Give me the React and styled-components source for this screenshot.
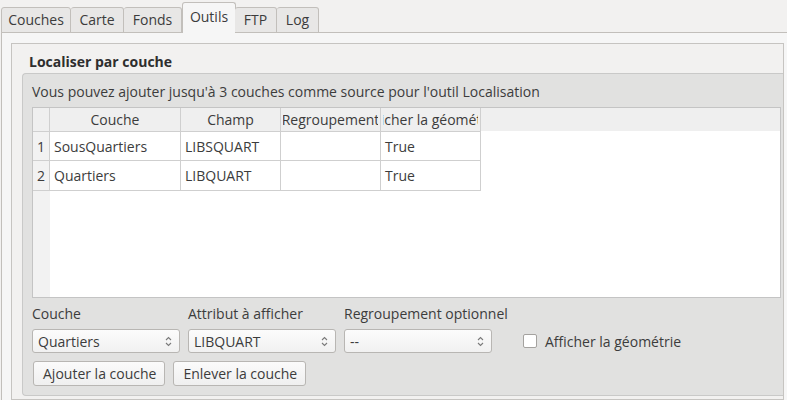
import React from "react";
import styled, { createGlobalStyle } from "styled-components";

const Global = createGlobalStyle`
  html, body { margin: 0; padding: 0; background: #f2f1f0; }
  body { font-family: "Open Sans", "Noto Sans", sans-serif; font-size: 14px; color: #3c3c3c; }
  * { box-sizing: border-box; }
`;

const Window = styled.div`
  width: 787px;
  height: 400px;
  overflow: hidden;
  display: flex;
  flex-direction: column;
`;

const TabBar = styled.div`
  display: flex;
  align-items: flex-end;
  height: 33px;
  padding-left: 1px;
  margin-bottom: -1px;
  position: relative;
  z-index: 1;
`;

const Tab = styled.div`
  height: ${(p) => (p.$active ? "31px" : "26px")};
  display: flex;
  align-items: center;
  justify-content: center;
  padding-bottom: ${(p) => (p.$active ? "3px" : "1px")};
  border: 1px solid #c2bfbb;
  border-bottom: ${(p) => (p.$active ? "none" : "1px solid #c2bfbb")};
  border-left: ${(p) => (p.$first || p.$active ? "1px solid #c2bfbb" : "none")};
  border-radius: 3px 3px 0 0;
  background: ${(p) => (p.$active ? "#f6f6f6" : "#e8e7e6")};
  color: #3c3c3c;
  font-size: 14px;
  white-space: nowrap;
  margin-left: ${(p) => (p.$afterActive ? "-1px" : "0")};
  width: ${(p) => p.$w}px;
`;

const Pane = styled.div`
  flex: 1;
  border-top: 1px solid #c2bfbb;
  border-left: 1px solid #c2bfbb;
  margin-left: 1px;
  background: #f6f6f6;
  padding: 10px 3px 0 9px;
  display: flex;
  flex-direction: column;
`;

const GroupBox = styled.div`
  flex: 1;
  border: 1px solid #c6c4c1;
  background: #f2f1f0;
  padding: 0 0 3px 10px;
  display: flex;
  flex-direction: column;
`;

const GroupTitle = styled.div`
  height: 29px;
  display: flex;
  align-items: center;
  padding-left: 7px;
  padding-top: 5px;
  font-weight: 700;
  font-size: 14px;
  color: #2e2e2e;
`;

const Frame = styled.div`
  flex: 1;
  background: #e1e1e0;
  border: 1px solid #c9c9c8;
  border-right: none;
  border-radius: 4px 0 0 4px;
  padding: 0 2px 0 9px;
  display: flex;
  flex-direction: column;
`;

const Info = styled.div`
  height: 33px;
  display: flex;
  align-items: center;
  padding-top: 2px;
  white-space: nowrap;
`;

const TableBox = styled.div`
  height: 191px;
  border: 1px solid #c4c4c4;
  background: #ffffff;
  display: grid;
  grid-template-columns: 17px 131px 100px 100px 100px 1fr;
  grid-template-rows: 24px 29px 30px 1fr;
  overflow: hidden;
`;

const HeadCell = styled.div`
  background: #efefef;
  border-right: 1px solid #cfcfcf;
  border-bottom: 1px solid #cfcfcf;
  padding: 0 2px;
  display: flex;
  align-items: center;
  min-width: 0;
`;

const HeadClip = styled.div`
  width: 100%;
  overflow: hidden;
  display: flex;
  justify-content: center;
  white-space: nowrap;
`;

const HeadText = styled.span`
  flex-shrink: 0;
`;

const HeadFill = styled.div`
  background: #efefef;
  border-bottom: 1px solid #ffffff;
`;

const RowHead = styled.div`
  background: #f2f2f2;
  border-right: 1px solid #cfcfcf;
  border-bottom: 1px solid #cfcfcf;
  display: flex;
  align-items: center;
  justify-content: center;
`;

const Cell = styled.div`
  border-right: 1px solid #cfcfcf;
  border-bottom: 1px solid #cfcfcf;
  display: flex;
  align-items: center;
  padding-left: 4px;
  white-space: nowrap;
  overflow: hidden;
`;

const Blank = styled.div`
  background: #ffffff;
`;

const RowHeadFill = styled.div`
  background: #f2f2f2;
`;

const FormGrid = styled.div`
  display: grid;
  grid-template-columns: 148px 148px 148px auto;
  column-gap: 8px;
  margin-top: 2px;
  align-items: center;
`;

const Label = styled.div`
  height: 27px;
  display: flex;
  align-items: center;
  white-space: nowrap;
`;

const Combo = styled.div`
  height: 24px;
  border: 1px solid #b8b6b3;
  border-radius: 3px;
  background: linear-gradient(#fcfcfc, #f1f1f1);
  display: flex;
  align-items: center;
  justify-content: space-between;
  padding: 0 7px 0 5px;
  margin-top: 2px;
  white-space: nowrap;
`;

const CheckWrap = styled.label`
  display: flex;
  align-items: center;
  gap: 8px;
  margin-left: 23px;
  margin-top: 2px;
  white-space: nowrap;
`;

const Box = styled.span`
  width: 14px;
  height: 14px;
  border: 1px solid #a4a29f;
  border-radius: 2px;
  background: #ffffff;
  display: inline-block;
`;

const ButtonRow = styled.div`
  display: flex;
  gap: 8px;
  margin-top: 8px;
  padding-left: 1px;
`;

const Button = styled.button`
  height: 25px;
  padding: 0 8px 0 9px;
  border: 1px solid #b8b6b3;
  border-radius: 3px;
  background: linear-gradient(#fbfbfb, #efefef);
  font-family: inherit;
  font-size: 14px;
  color: #3c3c3c;
  white-space: nowrap;
`;

const Arrows = () => (
  <svg width="7" height="11" viewBox="0 0 7 11">
    <path d="M1 4 L3.5 1.5 L6 4" fill="none" stroke="#7a7a7a" strokeWidth="1.1" />
    <path d="M1 7 L3.5 9.5 L6 7" fill="none" stroke="#7a7a7a" strokeWidth="1.1" />
  </svg>
);

const tabs = [
  { label: "Couches", w: 70 },
  { label: "Carte", w: 53 },
  { label: "Fonds", w: 58 },
  { label: "Outils", w: 54, active: true },
  { label: "FTP", w: 42 },
  { label: "Log", w: 42 },
];

const headers = ["", "Couche", "Champ", "Regroupement", "Afficher la géométrie"];

const rows = [
  ["1", "SousQuartiers", "LIBSQUART", "", "True"],
  ["2", "Quartiers", "LIBQUART", "", "True"],
];

export default function App() {
  return (
    <Window>
      <Global />
      <TabBar>
        {tabs.map((t, i) => (
          <Tab
            key={t.label}
            $w={t.w}
            $active={t.active}
            $first={i === 0}
            $afterActive={i > 0 && tabs[i - 1].active}
          >
            {t.label}
          </Tab>
        ))}
      </TabBar>
      <Pane>
        <GroupBox>
          <GroupTitle>Localiser par couche</GroupTitle>
          <Frame>
            <Info>Vous pouvez ajouter jusqu'à 3 couches comme source pour l'outil Localisation</Info>
            <TableBox>
              {headers.map((h, i) => (
                <HeadCell key={i}>
                  <HeadClip>
                    <HeadText>{h}</HeadText>
                  </HeadClip>
                </HeadCell>
              ))}
              <HeadFill />
              {rows.map((r) => (
                <React.Fragment key={r[0]}>
                  <RowHead>{r[0]}</RowHead>
                  <Cell>{r[1]}</Cell>
                  <Cell>{r[2]}</Cell>
                  <Cell>{r[3]}</Cell>
                  <Cell>{r[4]}</Cell>
                  <Blank />
                </React.Fragment>
              ))}
              <RowHeadFill />
              <Blank />
            </TableBox>
            <FormGrid>
              <Label>Couche</Label>
              <Label>Attribut à afficher</Label>
              <Label>Regroupement optionnel</Label>
              <span />
              <Combo>
                Quartiers <Arrows />
              </Combo>
              <Combo>
                LIBQUART <Arrows />
              </Combo>
              <Combo>
                -- <Arrows />
              </Combo>
              <CheckWrap>
                <Box />
                Afficher la géométrie
              </CheckWrap>
            </FormGrid>
            <ButtonRow>
              <Button>Ajouter la couche</Button>
              <Button>Enlever la couche</Button>
            </ButtonRow>
          </Frame>
        </GroupBox>
      </Pane>
    </Window>
  );
}
